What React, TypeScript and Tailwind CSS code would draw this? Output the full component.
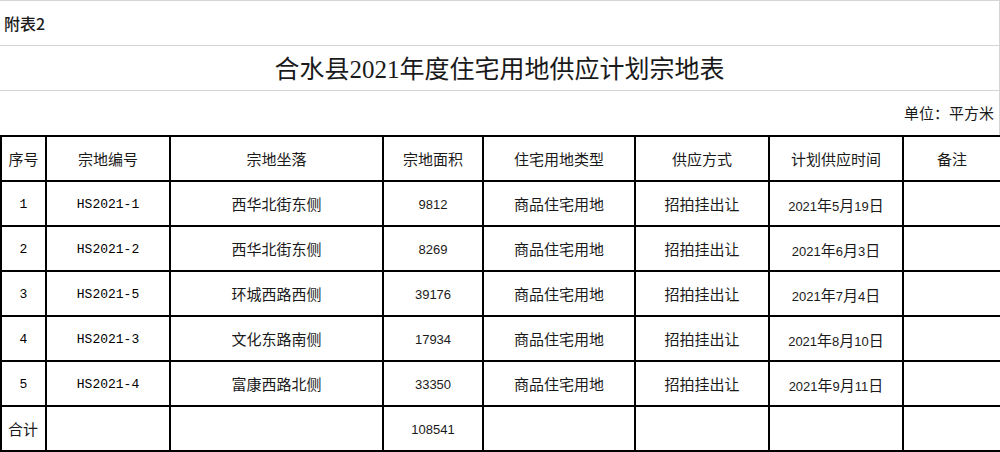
const cjk = "font-['Noto_Sans_CJK_SC',sans-serif]";
const num = "font-['Liberation_Sans','Noto_Sans_CJK_SC',sans-serif] text-[13px]";
const mono = "font-['Liberation_Mono','Noto_Sans_CJK_SC',monospace] text-[13px] text-black";

type Row = {
  no: string;
  code: string;
  place: string;
  area: string;
  type: string;
  way: string;
  date: string;
};

const rows: Row[] = [
  { no: "1", code: "HS2021-1", place: "西华北街东侧", area: "9812", type: "商品住宅用地", way: "招拍挂出让", date: "2021年5月19日" },
  { no: "2", code: "HS2021-2", place: "西华北街东侧", area: "8269", type: "商品住宅用地", way: "招拍挂出让", date: "2021年6月3日" },
  { no: "3", code: "HS2021-5", place: "环城西路西侧", area: "39176", type: "商品住宅用地", way: "招拍挂出让", date: "2021年7月4日" },
  { no: "4", code: "HS2021-3", place: "文化东路南侧", area: "17934", type: "商品住宅用地", way: "招拍挂出让", date: "2021年8月10日" },
  { no: "5", code: "HS2021-4", place: "富康西路北侧", area: "33350", type: "商品住宅用地", way: "招拍挂出让", date: "2021年9月11日" },
];

const headers = ["序号", "宗地编号", "宗地坐落", "宗地面积", "住宅用地类型", "供应方式", "计划供应时间", "备注"];
const widths = ["w-[45px]", "w-[124px]", "w-[213px]", "w-[100px]", "w-[152px]", "w-[134px]", "w-[134px]", "w-[98px]"];

const cell = "border-2 border-black text-center align-middle p-0 pt-[2px]";

// date like 2021年5月19日: sans digits, CJK units
function DateText({ value }: { value: string }) {
  const parts = value.split(/(\d+)/).filter(Boolean);
  return (
    <span>
      {parts.map((p, i) =>
        /\d/.test(p) ? (
          <span key={i} className={num}>
            {p}
          </span>
        ) : (
          <span key={i} className={`${cjk} text-[15px]`}>
            {p}
          </span>
        )
      )}
    </span>
  );
}

export default function App() {
  return (
    <div className="w-[1000px] h-[452px] bg-white text-[#1a1a1a] overflow-hidden">
      <div className="h-[45px] border-t border-r border-[#d4d4d4] flex items-center pl-[4px]">
        <span className={`${cjk} text-[16px] font-medium`}>附表2</span>
      </div>
      <div className="h-[45px] border-t border-r border-[#d4d4d4] flex items-center justify-center">
        <span className={`${cjk} text-[25px] leading-none`}>
          合水县<span className="font-['Liberation_Serif',serif]">2021</span>年度住宅用地供应计划宗地表
        </span>
      </div>
      <div className="h-[45px] border-t border-r border-[#d4d4d4] flex items-center justify-end pr-[5px]">
        <span className={`${cjk} text-[15px]`}>单位：平方米</span>
      </div>
      <table className="w-[1000px] table-fixed border-collapse">
        <colgroup>
          {widths.map((w, i) => (
            <col key={i} className={w} />
          ))}
        </colgroup>
        <tbody>
          <tr className="h-[45px]">
            {headers.map((h) => (
              <td key={h} className={`${cell} ${cjk} text-[15px]`}>
                {h}
              </td>
            ))}
          </tr>
          {rows.map((r) => (
            <tr key={r.no} className="h-[45px]">
              <td className={`${cell} ${mono}`}>{r.no}</td>
              <td className={`${cell} ${mono}`}>{r.code}</td>
              <td className={`${cell} ${cjk} text-[15px]`}>{r.place}</td>
              <td className={`${cell} ${num}`}>{r.area}</td>
              <td className={`${cell} ${cjk} text-[15px]`}>{r.type}</td>
              <td className={`${cell} ${cjk} text-[15px]`}>{r.way}</td>
              <td className={cell}>
                <DateText value={r.date} />
              </td>
              <td className={cell}></td>
            </tr>
          ))}
          <tr className="h-[45px]">
            <td className={`${cell} ${cjk} text-[15px] !text-left pl-[6px]`}>合计</td>
            <td className={cell}></td>
            <td className={cell}></td>
            <td className={`${cell} ${num}`}>108541</td>
            <td className={cell}></td>
            <td className={cell}></td>
            <td className={cell}></td>
            <td className={cell}></td>
          </tr>
        </tbody>
      </table>
    </div>
  );
}
